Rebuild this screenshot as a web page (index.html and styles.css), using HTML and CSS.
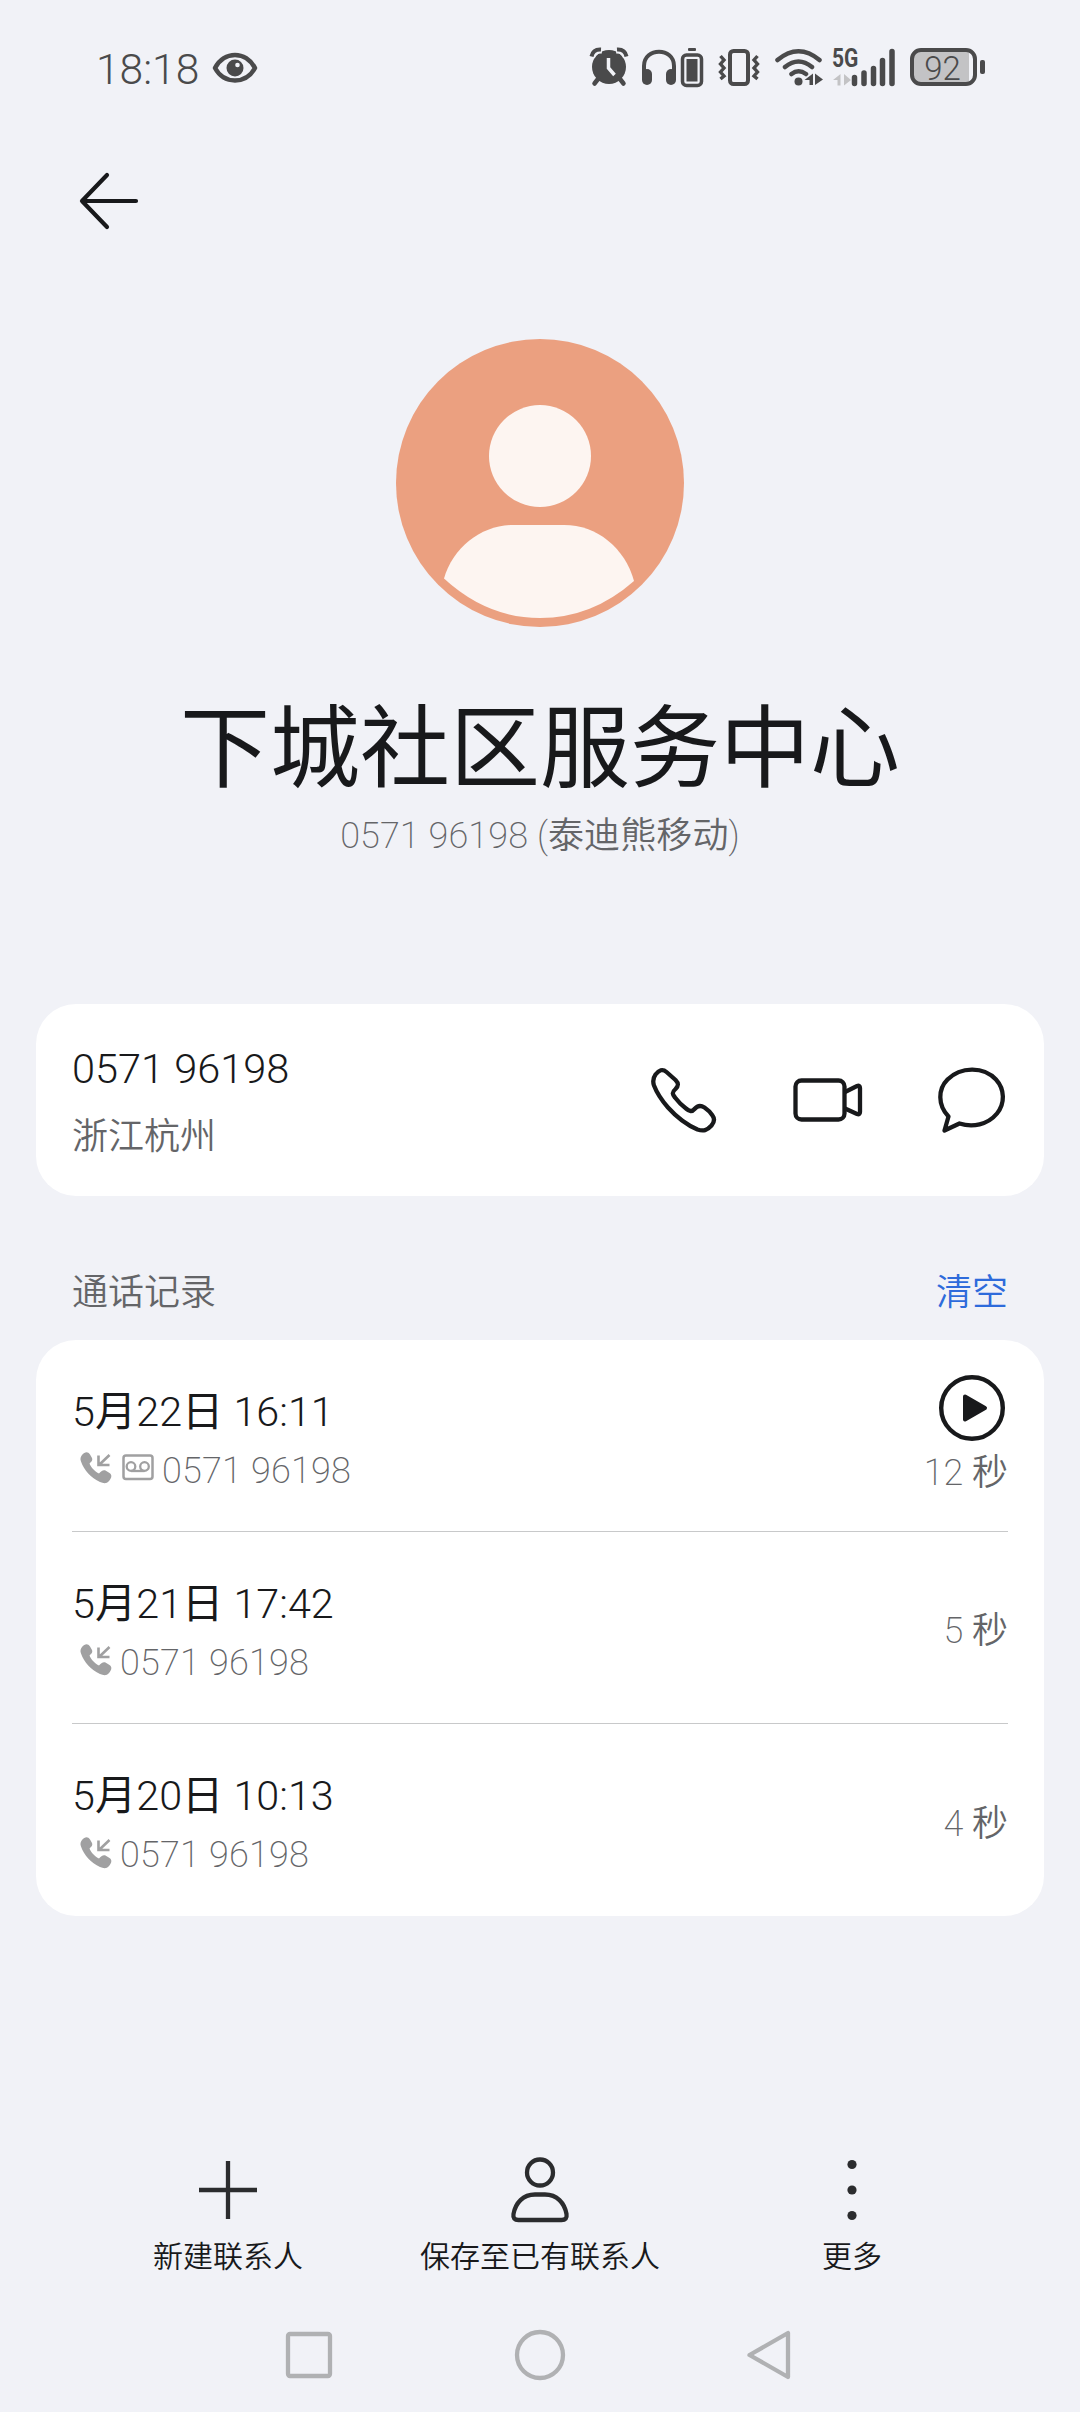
FILE: index.html
```html
<!DOCTYPE html>
<html lang="zh-CN">
    <head>
        <meta charset="UTF-8">
        <title>联系人详情</title>
        <link rel="stylesheet" href="styles.css">
    </head>
    <body>
        <div class="statusBar">
            <span class="time">18:18</span>
            <svg class="eye" width="46" height="32" viewBox="0 0 46 32">
                <path d="M3 16C12-1.500 34-1.500 43 16C34 32.500 12 32.500 3 16Z" fill="none" stroke="#4a4a4b" stroke-width="4.500" stroke-linejoin="round"/>
                <circle cx="23" cy="16" r="8.500" fill="#4a4a4b"/>
                <circle cx="25.500" cy="13" r="2.300" fill="#f1f2f7"/>
            </svg>
            <div class="statusIcons">
                <!-- alarm -->
                <svg width="40" height="46" viewBox="0 0 40 46">
                    <circle cx="20" cy="23" r="17" fill="#4a4a4b"/>
                    <path d="M2.500 13.500Q4 5.500 13 6M37.500 13.500Q36 5.500 27 6" fill="none" stroke="#f1f2f7" stroke-width="7"/>
                    <path d="M2.500 12.500Q4 5 12 5.500M37.500 12.500Q36 5 28 5.500" fill="none" stroke="#4a4a4b" stroke-width="4"/>
                    <path d="M9 35L5.500 39.500M31 35L34.500 39.500" stroke="#4a4a4b" stroke-width="4.500" stroke-linecap="round"/>
                    <path d="M19.500 14V24L25.500 31" fill="none" stroke="#f1f2f7" stroke-width="3.500"/>
                </svg>
                <!-- headphones -->
                <svg class="headphones" width="36" height="46" viewBox="0 0 36 46">
                    <path d="M3 32V22C3 3 33 3 33 22V32" fill="none" stroke="#4a4a4b" stroke-width="4"/>
                    <rect x="1" y="25" width="10" height="16" rx="5" fill="#4a4a4b"/>
                    <rect x="25" y="25" width="10" height="16" rx="5" fill="#4a4a4b"/>
                </svg>
                <svg class="miniBattery" width="24" height="46" viewBox="0 0 24 46">
                    <rect x="8" y="4" width="8" height="3" rx="1" fill="#4a4a4b"/>
                    <rect x="2.500" y="11" width="19" height="30.500" rx="4" fill="none" stroke="#4a4a4b" stroke-width="3.500"/>
                    <rect x="6.500" y="15" width="11" height="22.500" fill="#4a4a4b"/>
                </svg>
                <!-- vibrate -->
                <svg class="vibrate" width="44" height="46" viewBox="0 0 44 46">
                    <rect x="13" y="7" width="18" height="33" rx="3.500" fill="none" stroke="#4a4a4b" stroke-width="4"/>
                    <path d="M3.500 12L7 16L3.500 20L7 24L3.500 28L7 32L3.500 35M40.500 12L37 16L40.500 20L37 24L40.500 28L37 32L40.500 35" fill="none" stroke="#4a4a4b" stroke-width="3.400"/>
                </svg>
                <!-- wifi -->
                <svg class="wifi" width="50" height="46" viewBox="0 0 50 46">
                    <path d="M3.500 16Q24.500-1.500 45.500 16M11 23Q24.500 12 38 23M17.500 30Q24.500 24.500 32 30" fill="none" stroke="#4a4a4b" stroke-width="4.500" stroke-linecap="round"/>
                    <circle cx="24.500" cy="37.500" r="4" fill="#4a4a4b"/>
                    <path d="M39 29.500V41H35.500V36H30.500ZM41 41V29.500L49 35.500Z" fill="#4a4a4b"/>
                </svg>
                <!-- signal -->
                <div class="signal">
                    <span class="netType">5G</span>
                    <svg width="64" height="46" viewBox="0 0 64 46">
                        <path d="M8.500 30V41.500H5.500V36H1ZM12 41.500V30L19 36Z" fill="#c3c3c5"/>
                        <path d="M22.500 33.500V39.500M32 29V39.500M41.500 24.500V39.500M50.500 16.500V39.500M60 7.500V39.500" stroke="#4a4a4b" stroke-width="5.500" stroke-linecap="round"/>
                    </svg>
                </div>
                <div class="battery"><span>92</span></div>
            </div>
        </div>

        <div class="topBar">
            <svg width="62" height="60" viewBox="0 0 62 60">
                <path d="M29 4L4 30L29 56M4 30H58" fill="none" stroke="#18191b" stroke-width="4.200" stroke-linecap="round" stroke-linejoin="round"/>
            </svg>
        </div>

        <div class="profile">
            <svg class="avatar" width="288" height="288" viewBox="0 0 288 288">
                <circle cx="144" cy="144" r="144" fill="#eba080"/>
                <circle cx="144" cy="117" r="51" fill="#fdf5f1"/>
                <path d="M48 239.500C57 208 86 186 117 186H168C201 186 229 209 238 242Q196 279 144 279Q91 279 48 239.500Z" fill="#fdf5f1"/>
            </svg>
            <h1>下城社区服务中心</h1>
            <p>0571 96198 (<span class="zh">泰迪熊移动</span>)</p>
        </div>

        <div class="card numberCard">
            <div class="numberInfo">
                <div class="number">0571 96198</div>
                <div class="place">浙江杭州</div>
            </div>
            <div class="actions">
                <svg width="72" height="72" viewBox="0 0 72 72">
                    <path d="M9.500 10.500C13 6 16.500 4.500 20.500 8L29.500 16C33 19.500 32.500 22 29.500 25C25.500 28.500 26.500 30.500 29 33.500C32 37.500 36 41.500 40 44.500C43.500 47.500 46 48 48.500 45C51.500 41.500 54.500 41 58.500 43.500C61.500 45.500 64.500 48.500 66.500 51.500C69 55 68.500 58 65.500 61.500C61 66.500 57.500 67.500 51.500 65.500C41 61 30.500 53 22 43.500C15 35.500 10.500 28 8 21.500C6.500 17 7 14 9.500 10.500Z" fill="none" stroke="#18191b" stroke-width="4.300" stroke-linejoin="round"/>
                </svg>
                <svg width="72" height="72" viewBox="0 0 72 72">
                    <rect x="4.500" y="16.500" width="49" height="39" rx="6" fill="none" stroke="#18191b" stroke-width="4.300"/>
                    <path d="M54 28L66 22Q69 21 69 24V48Q69 51 66 50L54 44.500" fill="none" stroke="#18191b" stroke-width="4.300"/>
                </svg>
                <svg width="72" height="72" viewBox="0 0 72 72">
                    <path d="M12.500 52.500C1.500 41 2 25 11.500 15.500C25 2 48 2.500 60 15.500C69 25.500 69 39.500 61 49.500C51.500 61 36.500 63.500 23.500 59.500L8.500 66.500Z" fill="none" stroke="#18191b" stroke-width="4.300" stroke-linejoin="round"/>
                </svg>
            </div>
        </div>

        <div class="listTitle">
            <span>通话记录</span>
            <a class="clear">清空</a>
        </div>

        <div class="card">
            <div class="record">
                <div class="recordInfo">
                    <div class="date">5<span class="zh">月</span>22<span class="zh">日</span> 16:11</div>
                    <div class="detail">
                        <svg width="34" height="34" viewBox="0 0 34 34">
                            <path d="M3 4C6 .5 9 .5 11 3.500L13 7C14 9.500 12 11 10.500 12.500C12 16.500 16 20.500 20 22.500C22 20.500 24 18.500 26.500 19.500L30.500 22C33.500 24 32.500 27 30 30C27.500 33 24.500 32.500 21 31C12 27 5 19 2 10.500C1 8 1.500 6 3 4Z" fill="#a0a0a1"/>
                            <path d="M30.500 4L20 14M19.500 4.500V14H30.500" fill="none" stroke="#a0a0a1" stroke-width="2.600"/>
                        </svg>
                        <svg class="voicemail" width="34" height="34" viewBox="0 0 34 34">
                            <rect x="2.500" y="4.500" width="29" height="23.500" rx="2.500" fill="none" stroke="#a0a0a1" stroke-width="2.500"/>
                            <circle cx="10" cy="15.500" r="4.300" fill="none" stroke="#a0a0a1" stroke-width="2.300"/>
                            <circle cx="23.500" cy="15.500" r="4.300" fill="none" stroke="#a0a0a1" stroke-width="2.300"/>
                            <path d="M10 20H23.500" stroke="#a0a0a1" stroke-width="2.300"/>
                        </svg>
                        <span>0571 96198</span>
                    </div>
                </div>
                <div class="duration">
                    <svg width="70" height="70" viewBox="0 0 70 70">
                        <circle cx="35" cy="35" r="30.800" fill="none" stroke="#18191b" stroke-width="4.400"/>
                        <path d="M28 23.500L48 35L28 46.500Z" fill="#18191b" stroke="#18191b" stroke-width="4" stroke-linejoin="round"/>
                    </svg>
                    <div>12 <span class="zh">秒</span></div>
                </div>
            </div>
            <div class="record">
                <div class="recordInfo">
                    <div class="date">5<span class="zh">月</span>21<span class="zh">日</span> 17:42</div>
                    <div class="detail">
                        <svg width="34" height="34" viewBox="0 0 34 34">
                            <path d="M3 4C6 .5 9 .5 11 3.500L13 7C14 9.500 12 11 10.500 12.500C12 16.500 16 20.500 20 22.500C22 20.500 24 18.500 26.500 19.500L30.500 22C33.500 24 32.500 27 30 30C27.500 33 24.500 32.500 21 31C12 27 5 19 2 10.500C1 8 1.500 6 3 4Z" fill="#a0a0a1"/>
                            <path d="M30.500 4L20 14M19.500 4.500V14H30.500" fill="none" stroke="#a0a0a1" stroke-width="2.600"/>
                        </svg>
                        <span>0571 96198</span>
                    </div>
                </div>
                <div class="duration"><div>5 <span class="zh">秒</span></div></div>
            </div>
            <div class="record">
                <div class="recordInfo">
                    <div class="date">5<span class="zh">月</span>20<span class="zh">日</span> 10:13</div>
                    <div class="detail">
                        <svg width="34" height="34" viewBox="0 0 34 34">
                            <path d="M3 4C6 .5 9 .5 11 3.500L13 7C14 9.500 12 11 10.500 12.500C12 16.500 16 20.500 20 22.500C22 20.500 24 18.500 26.500 19.500L30.500 22C33.500 24 32.500 27 30 30C27.500 33 24.500 32.500 21 31C12 27 5 19 2 10.500C1 8 1.500 6 3 4Z" fill="#a0a0a1"/>
                            <path d="M30.500 4L20 14M19.500 4.500V14H30.500" fill="none" stroke="#a0a0a1" stroke-width="2.600"/>
                        </svg>
                        <span>0571 96198</span>
                    </div>
                </div>
                <div class="duration"><div>4 <span class="zh">秒</span></div></div>
            </div>
        </div>

        <div class="toolBar">
            <div class="tool">
                <svg width="72" height="72" viewBox="0 0 72 72">
                    <path d="M36 7V65M7 36H65" stroke="#2b2c2e" stroke-width="4.300"/>
                </svg>
                <span>新建联系人</span>
            </div>
            <div class="tool">
                <svg width="72" height="72" viewBox="0 0 72 72">
                    <circle cx="36" cy="18.500" r="13" fill="none" stroke="#2b2c2e" stroke-width="4.300"/>
                    <path d="M31 40.500H41C53 40.500 60.500 49 62.500 60Q63.500 66 57.500 66H14.500Q8.500 66 9.500 60C11.500 49 19 40.500 31 40.500Z" fill="none" stroke="#2b2c2e" stroke-width="4.300"/>
                </svg>
                <span>保存至已有联系人</span>
            </div>
            <div class="tool">
                <svg width="72" height="72" viewBox="0 0 72 72">
                    <circle cx="36" cy="10.500" r="4.600" fill="#2b2c2e"/>
                    <circle cx="36" cy="36" r="4.600" fill="#2b2c2e"/>
                    <circle cx="36" cy="61.500" r="4.600" fill="#2b2c2e"/>
                </svg>
                <span>更多</span>
            </div>
        </div>

        <div class="navBar">
            <svg width="60" height="60" viewBox="0 0 60 60">
                <rect x="9" y="9" width="42" height="42" rx="2" fill="none" stroke="#b0b1b3" stroke-width="4.300"/>
            </svg>
            <svg width="60" height="60" viewBox="0 0 60 60">
                <circle cx="30" cy="30" r="23" fill="none" stroke="#b0b1b3" stroke-width="4.300"/>
            </svg>
            <svg width="60" height="60" viewBox="0 0 60 60">
                <path d="M47 8V52L8.500 30Z" fill="none" stroke="#b0b1b3" stroke-width="4.300" stroke-linejoin="round"/>
            </svg>
        </div>
    </body>
</html>
```
FILE: styles.css
```css
html,body{
    padding: 0;
    margin: 0;
    background-color: #f1f2f7;
}
body{
    width: 1080px;
    height: 2412px;
    overflow: hidden;
    display: flex;
    flex-direction: column;
    font-family: Roboto, "Noto Sans CJK SC", sans-serif;
    font-weight: 300;
    color: #18191b;
}
svg{
    display: block;
    flex-shrink: 0;
}
.zh{
    font-weight: 350;
}

/* status bar */
.statusBar{
    height: 134px;
    padding: 0 103px 0 96px;
    box-sizing: border-box;
    display: flex;
    align-items: center;
    color: #4a4a4b;
}
.statusBar .time{
    font-size: 42.5px;
    font-weight: 350;
    line-height: 50px;
    margin-top: 6px;
}
.statusBar .eye{
    margin-left: 13px;
    margin-top: 2px;
}
.statusIcons{
    margin-left: auto;
    display: flex;
    align-items: center;
}
.statusIcons .headphones{
    margin-left: 12px;
}
.statusIcons .miniBattery{
    margin-left: 3px;
}
.statusIcons .vibrate{
    margin-left: 13px;
}
.statusIcons .wifi{
    margin-left: 13px;
}
.signal{
    position: relative;
    margin: 0 14px 0 8px;
}
.signal .netType{
    position: absolute;
    left: 0;
    top: 3px;
    font-size: 25px;
    font-weight: 700;
    line-height: 24px;
    transform: scaleX(.84);
    transform-origin: left;
}
.battery{
    position: relative;
    width: 67px;
    height: 38px;
    box-sizing: border-box;
    border: 4px solid #4a4a4b;
    border-radius: 11px;
    background: linear-gradient(to right, #c3c3c5 55px, #f1f2f7 55px);
    text-align: center;
    font-size: 33px;
    line-height: 33px;
}
.battery span{
    margin-right: 2px;
}
.battery::after{
    content: "";
    position: absolute;
    right: -12px;
    top: 8px;
    width: 5px;
    height: 14px;
    border-radius: 2px;
    background-color: #4a4a4b;
}

.topBar{
    height: 134px;
    padding: 37px 78px 0;
    box-sizing: border-box;
}

/* avatar and name */
.profile{
    height: 736px;
    padding-top: 71px;
    box-sizing: border-box;
    text-align: center;
}
.profile .avatar{
    margin: 0 auto;
}
.profile h1{
    margin: 58px 0 0;
    font-size: 90px;
    font-weight: 400;
    line-height: 130px;
}
.profile p{
    margin: -4px 0 0;
    font-size: 36px;
    font-weight: 200;
    line-height: 50px;
    letter-spacing: .1px;
    color: #646568;
}

.card{
    margin: 0 36px;
    padding: 0 36px;
    background-color: white;
    border-radius: 40px;
}
.numberCard{
    height: 192px;
    box-sizing: border-box;
    display: flex;
    justify-content: space-between;
}
.numberCard .number{
    margin-top: 37px;
    font-size: 41.5px;
    line-height: 56px;
}
.numberCard .place{
    margin-top: 15px;
    font-size: 36px;
    font-weight: 350;
    line-height: 50px;
    color: #646568;
}
.actions{
    display: flex;
    align-items: center;
    gap: 73px;
}

.listTitle{
    height: 144px;
    padding: 72px 72px 0;
    box-sizing: border-box;
    display: flex;
    justify-content: space-between;
    font-size: 36px;
    font-weight: 350;
    line-height: 50px;
    color: #646568;
}
.listTitle .clear{
    color: #2e6bdb;
}

/* call records */
.record{
    height: 192px;
    padding-top: 8px;
    box-sizing: border-box;
    border-bottom: 1px solid #c8c9ca;
    display: flex;
    justify-content: space-between;
    align-items: center;
}
.record:last-child{
    border-bottom: none;
}
.record .date{
    margin-top: 2px;
    font-size: 41.3px;
    line-height: 60px;
}
.record .date .zh{
    font-weight: 400;
}
.record .detail{
    display: flex;
    align-items: center;
    padding-left: 7px;
    font-size: 36px;
    font-weight: 200;
    line-height: 58px;
    letter-spacing: .2px;
    color: #646568;
}
.record .detail svg{
    margin-top: -5px;
}
.record .detail span{
    margin-left: 7px;
}
.record .detail .voicemail{
    margin-left: 8px;
}
.record .duration{
    display: flex;
    flex-direction: column;
    align-items: flex-end;
    font-size: 36px;
    font-weight: 200;
    line-height: 56px;
    margin-top: -1px;
    color: #646568;
}
.record .duration svg{
    margin-top: -4px;
    margin-right: 1px;
    margin-bottom: 2px;
}

/* bottom buttons */
.toolBar{
    margin-top: auto;
    height: 192px;
    padding: 0 72px;
    display: grid;
    grid-template-columns: repeat(3, 1fr);
}
.tool{
    display: flex;
    flex-direction: column;
    align-items: center;
    padding-top: 21px;
    font-size: 30px;
    font-weight: 350;
    line-height: 44px;
}
.tool span{
    margin-top: 9px;
}
.navBar{
    height: 87px;
    display: flex;
    justify-content: center;
    gap: 171px;
}
```
